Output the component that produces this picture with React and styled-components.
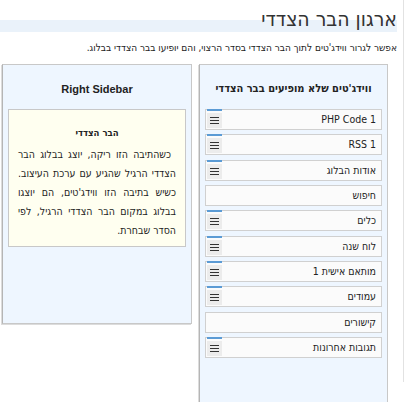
import React from "react";
import styled, { createGlobalStyle } from "styled-components";

const Global = createGlobalStyle`
  html, body { margin: 0; padding: 0; background: #fff; }
  body { width: 408px; height: 402px; overflow: hidden; font-family: "DejaVu Sans Condensed", "DejaVu Sans", sans-serif; font-stretch: condensed; color: #333; }
`;

const Page = styled.div`
  direction: rtl;
  width: 404px;
  height: 402px;
  box-sizing: border-box;
`;

const Wrap = styled.div`
  margin-top: 20px;
  border-right: 1px solid #e2e2e2;
  padding-right: 6px;
  height: 382px;
`;

const Heading = styled.h2`
  margin: -20px 0 0 0;
  height: 32px;
  font-size: 21px;
  font-weight: normal;
  line-height: 39px;
  color: #333;
  background: linear-gradient(to bottom, transparent 20px, #eaf2fa 20px, #eaf2fa 32px, transparent 32px);
`;

const Intro = styled.p`
  margin: 9px 0 0 0;
  font-size: 10px;
  line-height: 14px;
  color: #222;
`;

const Columns = styled.div`
  display: flex;
  gap: 7px;
  padding-right: 9px;
  margin-top: 9px;
  align-items: flex-start;
`;

const Panel = styled.div`
  box-sizing: border-box;
  width: ${p => p.$w}px;
  height: ${p => p.$h}px;
  background: #eef6ff;
  border: 1px solid #c8c8c8;
  border-left-color: #b5b5b5;
  box-shadow: -1px 1px 0 #dcdcdc;
  padding: 0 5px;
`;

const PanelTitle = styled.h3`
  margin: 0;
  padding: 17px 0 13px;
  font-size: 11px;
  line-height: 14px;
  font-weight: bold;
  text-align: center;
  color: #222;
  white-space: nowrap;
  font-family: ${p => (p.$latin ? '"Liberation Sans", Arial, sans-serif' : "inherit")};
`;

const Note = styled.div`
  background: #fffff0;
  border: 1px solid #c8c8c8;
  padding: 13px 9px 6px;
  font-size: 10.5px;
  line-height: 19px;
  color: #222;
`;

const NoteTitle = styled.div`
  font-weight: bold;
  text-align: center;
  font-size: 9.5px;
`;

const NoteText = styled.p`
  margin: 3px 0 0;
  text-align: justify;
  text-indent: 5px;
`;

const List = styled.div`
  display: flex;
  flex-direction: column;
  gap: 4.33px;
`;

const Item = styled.div`
  position: relative;
  height: 21px;
  box-sizing: border-box;
  background: #fbfbfb;
  border: 1px solid #d0d0d0;
  font-size: 10.5px;
  line-height: 19px;
  padding-right: 5px;
  color: #222;
`;

const Handle = styled.span`
  position: absolute;
  left: 1px;
  top: -1px;
  width: 15px;
  height: 19px;
  &::before {
    content: "";
    position: absolute;
    left: 0; top: 0; width: 15px; height: 2px;
    background: #5b9bd5;
  }
`;

const HandleBox = styled.span`
  position: absolute;
  left: 0; top: 4px;
  width: 15px; height: 15px;
  background: #ececec;
  display: flex;
  align-items: center;
  justify-content: center;
`;

const items = [
  { t: "PHP Code 1", h: true },
  { t: "RSS 1", h: true },
  { t: "אודות הבלוג", h: true },
  { t: "חיפוש", h: false },
  { t: "כלים", h: true },
  { t: "לוח שנה", h: true },
  { t: "מותאם אישית 1", h: true },
  { t: "עמודים", h: true },
  { t: "קישורים", h: false },
  { t: "תגובות אחרונות", h: true },
];

const Lines = () => (
  <svg width="9" height="7" viewBox="0 0 9 7">
    <rect x="0" y="0" width="9" height="1" fill="#333" />
    <rect x="0" y="3" width="9" height="1" fill="#333" />
    <rect x="0" y="6" width="9" height="1" fill="#333" />
  </svg>
);

export default function App() {
  return (
    <Page>
      <Global />
      <Wrap>
        <Heading>ארגון הבר הצדדי</Heading>
        <Intro>אפשר לגרור ווידג'טים לתוך הבר הצדדי בסדר הרצוי, והם יופיעו בבר הצדדי בבלוג.</Intro>
        <Columns>
          <Panel $w={189} $h={345}>
            <PanelTitle>ווידג'טים שלא מופיעים בבר הצדדי</PanelTitle>
            <List>
              {items.map(it => (
                <Item key={it.t}>
                  {it.t}
                  {it.h && (
                    <Handle>
                      <HandleBox><Lines /></HandleBox>
                    </Handle>
                  )}
                </Item>
              ))}
            </List>
          </Panel>
          <Panel $w={190} $h={260}>
            <PanelTitle dir="ltr" $latin>Right Sidebar</PanelTitle>
            <Note>
              <NoteTitle>הבר הצדדי</NoteTitle>
              <NoteText>כשהתיבה הזו ריקה, יוצג בבלוג הבר הצדדי הרגיל שהגיע עם ערכת העיצוב. כשיש בתיבה הזו ווידג'טים, הם יוצגו בבלוג במקום הבר הצדדי הרגיל, לפי הסדר שבחרת.</NoteText>
            </Note>
          </Panel>
        </Columns>
      </Wrap>
    </Page>
  );
}
